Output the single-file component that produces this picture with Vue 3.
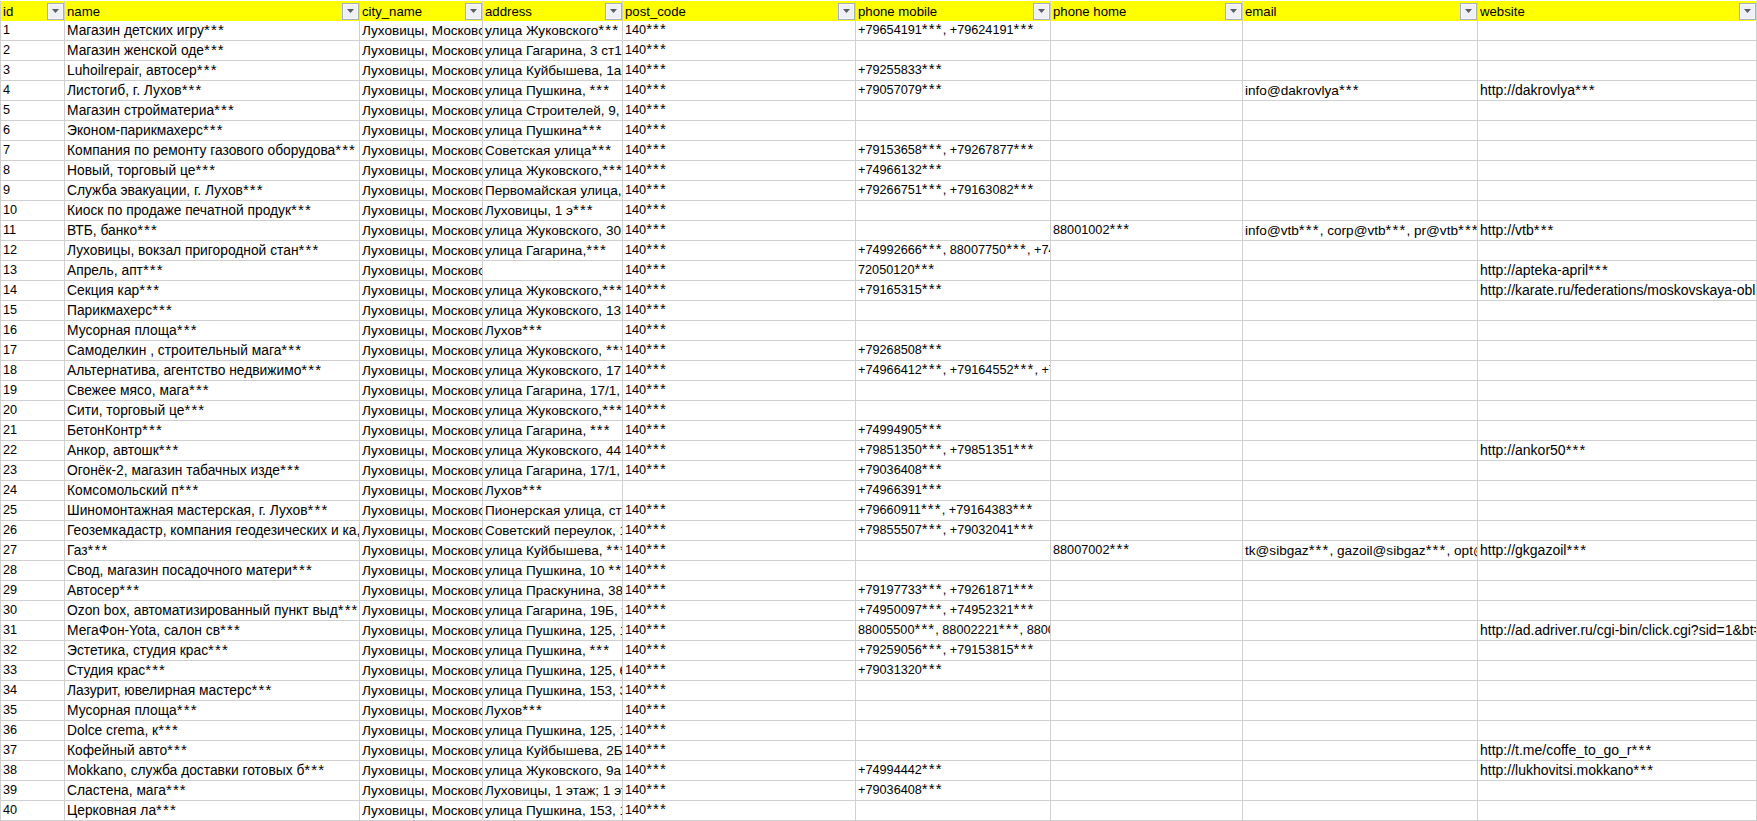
<script setup>
const columns = [
  { key: 'id', label: 'id', width: 65, kind: 'num' },
  { key: 'name', label: 'name', width: 295, kind: 'cyr' },
  { key: 'city', label: 'city_name', width: 123, kind: 'addr' },
  { key: 'address', label: 'address', width: 140, kind: 'addr' },
  { key: 'post', label: 'post_code', width: 233, kind: 'num' },
  { key: 'mobile', label: 'phone mobile', width: 195, kind: 'num' },
  { key: 'home', label: 'phone home', width: 192, kind: 'num' },
  { key: 'email', label: 'email', width: 235, kind: 'lat' },
  { key: 'website', label: 'website', width: 279, kind: 'web' }
]

const names = ['Магазин детских игру***','Магазин женской оде***','Luhoilrepair, автосер***','Листогиб, г. Лухов***','Магазин стройматериа***','Эконом-парикмахерс***','Компания по ремонту газового оборудова***','Новый, торговый це***','Служба эвакуации, г. Лухов***','Киоск по продаже печатной продук***','ВТБ, банко***','Луховицы, вокзал пригородной стан***','Апрель, апт***','Секция кар***','Парикмахерс***','Мусорная площа***','Самоделкин , строительный мага***','Альтернатива, агентство недвижимо***','Свежее мясо, мага***','Сити, торговый це***','БетонКонтр***','Анкор, автошк***','Огонёк-2, магазин табачных изде***','Комсомольский п***','Шиномонтажная мастерская, г. Лухов***','Геоземкадастр, компания геодезических и ка, ***','Газ***','Свод, магазин посадочного матери***','Автосер***','Ozon box, автоматизированный пункт выд***','МегаФон-Yota, салон св***','Эстетика, студия крас***','Студия крас***','Лазурит, ювелирная мастерс***','Мусорная площа***','Dolce crema, к***','Кофейный авто***','Mokkano, служба доставки готовых б***','Сластена, мага***','Церковная ла***']

const addresses = ['улица Жуковского***','улица Гагарина, 3 ст1, 1 этаж','улица Куйбышева, 1а, 1 этаж','улица Пушкина, ***','улица Строителей, 9, 1 этаж','улица Пушкина***','Советская улица***','улица Жуковского,***','Первомайская улица, 1 этаж','Луховицы, 1 э***','улица Жуковского, 30, 1 этаж','улица Гагарина,***','','улица Жуковского,***','улица Жуковского, 13, 1 этаж','Лухов***','улица Жуковского, ***','улица Жуковского, 17, 1 этаж','улица Гагарина, 17/1, 1 этаж','улица Жуковского,***','улица Гагарина, ***','улица Жуковского, 44, 1 этаж','улица Гагарина, 17/1, 1 этаж','Лухов***','Пионерская улица, стр. 1','Советский переулок, 1 этаж','улица Куйбышева, ***','улица Пушкина, 10 ***','улица Праскунина, 38, 1 этаж','улица Гагарина, 19Б, угол','улица Пушкина, 125, 1 этаж','улица Пушкина, ***','улица Пушкина, 125, 6 этаж','улица Пушкина, 153, 3 этаж','Лухов***','улица Пушкина, 125, 1 этаж','улица Куйбышева, 2Б, 1 этаж','улица Жуковского, 9а, 1 этаж','Луховицы, 1 этаж; 1 этаж','улица Пушкина, 153, 1 этаж']

const mobiles = {
  1: '+79654191***, +79624191***', 3: '+79255833***', 4: '+79057079***', 7: '+79153658***, +79267877***',
  8: '+74966132***', 9: '+79266751***, +79163082***', 12: '+74992666***, 88007750***, +74992666***',
  13: '72050120***', 14: '+79165315***', 17: '+79268508***', 18: '+74966412***, +79164552***, +79164552***',
  21: '+74994905***', 22: '+79851350***, +79851351***', 23: '+79036408***', 24: '+74966391***',
  25: '+79660911***, +79164383***', 26: '+79855507***, +79032041***', 29: '+79197733***, +79261871***',
  30: '+74950097***, +74952321***', 31: '88005500***, 88002221***, 88005500***', 32: '+79259056***, +79153815***',
  33: '+79031320***', 38: '+74994442***', 39: '+79036408***'
}
const homes = { 11: '88001002***', 27: '88007002***' }
const emails = {
  4: 'info@dakrovlya***', 11: 'info@vtb***, corp@vtb***, pr@vtb***',
  27: 'tk@sibgaz***, gazoil@sibgaz***, opt@sibgaz***'
}
const websites = {
  4: 'http://dakrovlya***', 11: 'http://vtb***', 13: 'http://apteka-april***',
  14: 'http://karate.ru/federations/moskovskaya-oblast', 22: 'http://ankor50***', 27: 'http://gkgazoil***',
  31: 'http://ad.adriver.ru/cgi-bin/click.cgi?sid=1&bt=2', 37: 'http://t.me/coffe_to_go_r***',
  38: 'http://lukhovitsi.mokkano***'
}

const rows = names.map((name, i) => {
  const id = i + 1
  return {
    id,
    name,
    city: 'Луховицы, Московская область',
    address: addresses[i],
    post: id === 24 ? '' : '140***',
    mobile: mobiles[id] || '',
    home: homes[id] || '',
    email: emails[id] || '',
    website: websites[id] || ''
  }
})

const parts = (value) => String(value).split(/(\*+)/).filter(Boolean)
</script>

<template>
  <div class="sheet">
    <table class="grid">
      <colgroup>
        <col v-for="c in columns" :key="c.key" :style="{ width: c.width + 'px' }" />
      </colgroup>
      <thead>
        <tr>
          <th v-for="c in columns" :key="c.key">
            <div class="head">
              <span class="label">{{ c.label }}</span>
              <span class="filter"><svg width="7" height="4" viewBox="0 0 7 4"><path d="M0 0h7L3.5 4z" fill="#585e66" /></svg></span>
            </div>
          </th>
        </tr>
      </thead>
      <tbody>
        <tr v-for="r in rows" :key="r.id">
          <td v-for="c in columns" :key="c.key" :class="c.kind"><span v-for="(p, i) in parts(r[c.key])" :key="i" :class="{ mask: p[0] === '*' }">{{ p }}</span></td>
        </tr>
      </tbody>
    </table>
  </div>
</template>

<style scoped>
.sheet {
  width: 1757px;
  height: 821px;
  overflow: hidden;
  background: #fff;
  padding-top: 1px;
  box-sizing: border-box;
}
.grid {
  table-layout: fixed;
  width: 1757px;
  border-collapse: separate;
  border-spacing: 0;
  font-family: "Liberation Sans", Arial, sans-serif;
  color: #000;
}
th {
  height: 20px;
  padding: 0;
  background: #ffff00;
  font-weight: 400;
  font-size: 13.2px;
  text-align: left;
  border-right: 1px solid #d0d0d0;
}
th:last-child {
  border-right-color: #c4d8d0;
}
th:first-child,
td:first-child {
  border-left: 1px solid #d0d0d0;
}
.head {
  display: flex;
  align-items: center;
  justify-content: space-between;
  height: 20px;
  padding: 0 0 0 2px;
}
.label {
  white-space: nowrap;
  overflow: hidden;
}
.filter {
  flex: none;
  width: 15px;
  height: 15px;
  border: 1px solid #a6afbd;
  box-shadow: inset 0 0 0 1px #f7f8fa;
  background: #eef0f3;
  display: flex;
  align-items: center;
  justify-content: center;
}
td {
  height: 19px;
  padding: 0 0 0 2px;
  box-sizing: content-box;
  border-right: 1px solid #d0d0d0;
  border-bottom: 1px solid #d0d0d0;
  white-space: nowrap;
  overflow: hidden;
  line-height: 19px;
}
.cyr {
  font-size: 13.8px;
}
.addr {
  font-size: 13.55px;
}
.num {
  font-size: 12.7px;
}
.lat {
  font-size: 13.6px;
}
.web {
  font-size: 14px;
}
.mask {
  font-size: 15px;
  letter-spacing: 1.1px;
  line-height: 1;
}
</style>
